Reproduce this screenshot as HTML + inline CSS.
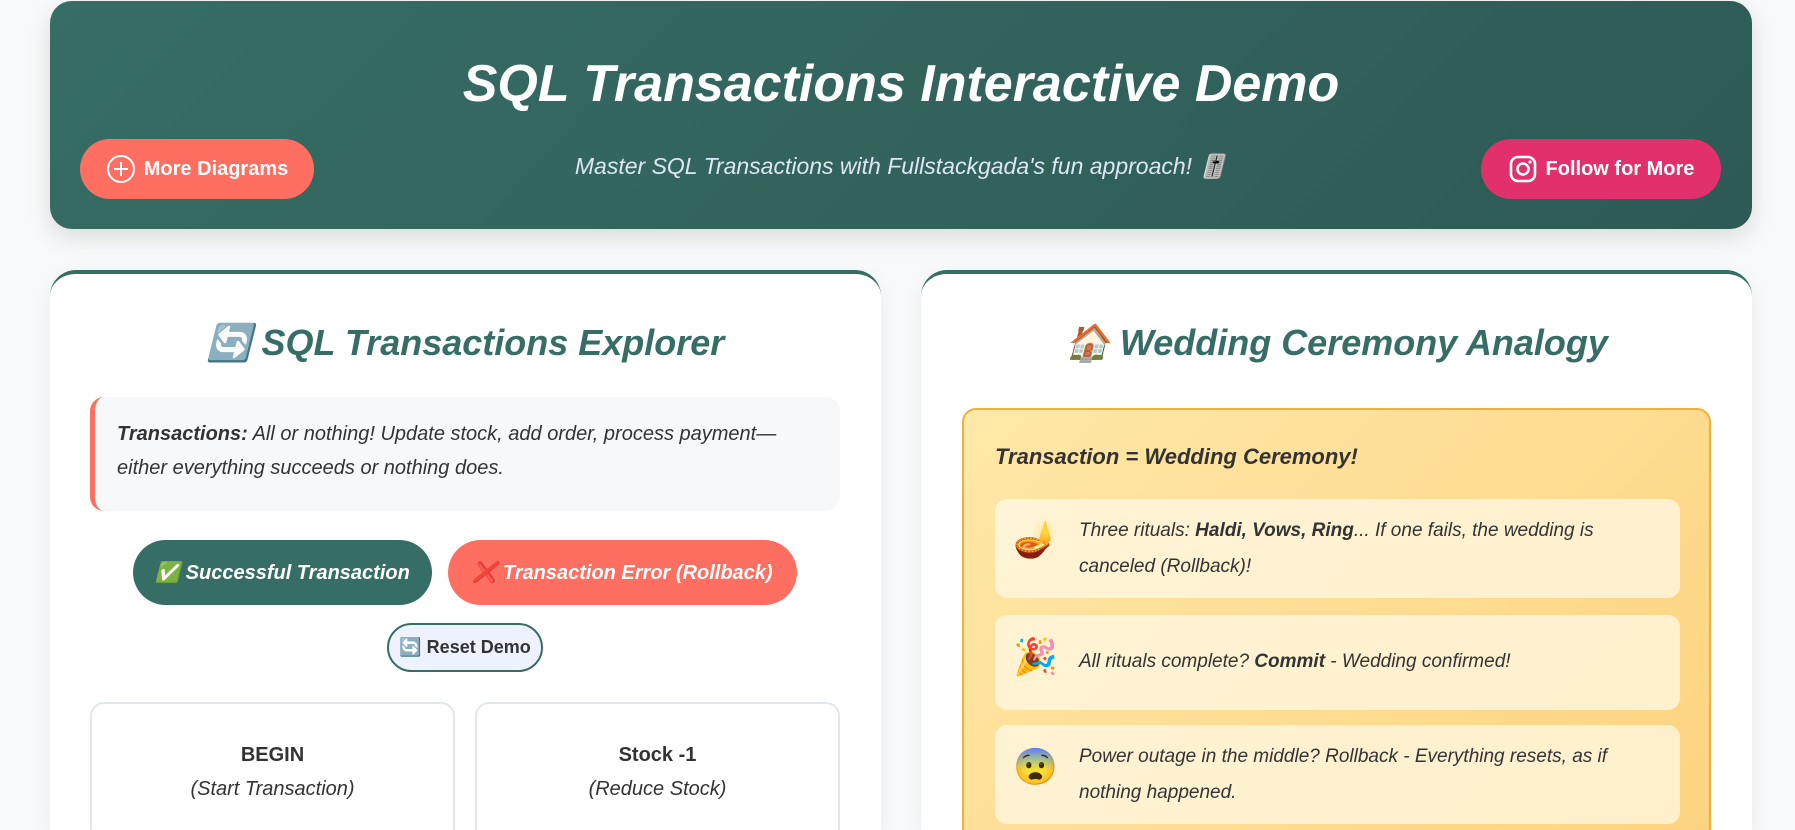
<!DOCTYPE html>
<html><head><meta charset="utf-8"><style>
*{box-sizing:border-box;margin:0;padding:0}
html,body{width:1795px;height:830px;overflow:hidden}
body{background:#f7f9fa;font-family:"Liberation Sans",sans-serif;position:relative}
.hdr{position:absolute;left:50px;top:1px;width:1702px;height:228px;border-radius:22px;background:linear-gradient(135deg,#366d64,#2d5a54);box-shadow:0 8px 24px rgba(0,0,0,.12)}
.hdr h1{position:absolute;left:0;right:0;top:53px;text-align:center;color:#fff;font-size:52px;font-style:italic;font-weight:bold;letter-spacing:0}
.btn{position:absolute;height:60px;border-radius:30px;color:#fff;font-weight:bold;font-size:20px;display:flex;align-items:center;justify-content:center;gap:8px}
.sub{position:absolute;left:0;right:0;top:152px;text-align:center;color:#dde6f5;font-size:23px;font-style:italic}
.card{position:absolute;top:270px;width:831px;height:560px;background:#fff;border-radius:26px 26px 0 0;border-top:4px solid #366d64;box-shadow:0 6px 20px rgba(0,0,0,.06);overflow:hidden}
.ct{position:absolute;left:0;right:0;top:48px;text-align:center;color:#366d64;font-size:36px;font-weight:bold;font-style:italic}
.info{position:absolute;left:40px;top:123px;width:750px;height:114px;background:#f7f8fa;border-left:5px solid #ff7062;border-radius:14px;padding:20px 22px;font-size:20px;line-height:34px;color:#333;font-style:italic}
.step{position:absolute;top:428px;width:365px;height:140px;border:2px solid #e2e8ea;border-radius:14px;text-align:center;padding-top:34px;font-size:20px;color:#333;line-height:34px}
.yb{position:absolute;left:41px;top:134px;width:749px;height:480px;border:2px solid #f0b03a;border-radius:14px;background:linear-gradient(135deg,#ffe8a8,#fdd27e)}
.it{position:absolute;left:31px;width:685px;border-radius:12px;background:rgba(255,248,230,.75);font-size:19px;font-style:italic;color:#333;line-height:36px;padding:14px 20px 14px 84px}
.it .e{position:absolute;left:18px;font-size:36px;font-style:normal}
</style></head><body>
<div class="hdr">
<h1>SQL Transactions Interactive Demo</h1>
<div class="btn" style="left:30px;top:138px;width:234px;background:#ff6f61"><svg width="30" height="30" viewBox="0 0 30 30"><circle cx="15" cy="15" r="13" fill="none" stroke="#fff" stroke-width="2"/><path d="M15 8v14M8 15h14" stroke="#fff" stroke-width="2"/></svg>More Diagrams</div>
<div class="sub">Master SQL Transactions with Fullstackgada's fun approach! 🎚️</div>
<div class="btn" style="left:1431px;top:138px;width:240px;background:#e1306c"><svg width="30" height="30" viewBox="0 0 30 30"><rect x="3" y="3" width="24" height="24" rx="7" fill="none" stroke="#fff" stroke-width="2.6"/><circle cx="15" cy="15" r="5.5" fill="none" stroke="#fff" stroke-width="2.6"/><circle cx="22" cy="8" r="1.6" fill="#fff"/></svg>Follow for More</div>
</div>
<div class="card" style="left:50px">
<div class="ct">🔄 SQL Transactions Explorer</div>
<div class="info"><b>Transactions:</b> All or nothing! Update stock, add order, process payment—either everything succeeds or nothing does.</div>
<div class="btn" style="left:83px;top:266px;width:299px;height:65px;border-radius:33px;background:#366d64;font-style:italic">✅ Successful Transaction</div>
<div class="btn" style="left:398px;top:266px;width:349px;height:65px;border-radius:33px;background:#ff6f61;font-style:italic">❌ Transaction Error (Rollback)</div>
<div class="btn" style="left:337px;top:349px;width:156px;height:49px;border-radius:25px;background:#eef2ff;border:2px solid #366d64;color:#333;font-size:18px">🔄 Reset Demo</div>
<div class="step" style="left:40px"><b>BEGIN</b><br><i>(Start Transaction)</i></div>
<div class="step" style="left:425px"><b>Stock -1</b><br><i>(Reduce Stock)</i></div>
</div>
<div class="card" style="left:921px">
<div class="ct">🏠 Wedding Ceremony Analogy</div>
<div class="yb">
<div style="position:absolute;left:31px;top:34px;font-size:22px;font-weight:bold;color:#333;font-style:italic">Transaction = Wedding Ceremony!</div>
<div class="it" style="top:89px;height:99px"><span class="e" style="top:22px">🪔</span>Three rituals: <b>Haldi, Vows, Ring</b>... If one fails, the wedding is canceled (Rollback)!</div>
<div class="it" style="top:205px;height:95px;padding-top:29px"><span class="e" style="top:24px">🎉</span>All rituals complete? <b>Commit</b> - Wedding confirmed!</div>
<div class="it" style="top:315px;height:99px"><span class="e" style="top:24px">😨</span>Power outage in the middle? Rollback - Everything resets, as if nothing happened.</div>
</div>
</div>
</body></html>
